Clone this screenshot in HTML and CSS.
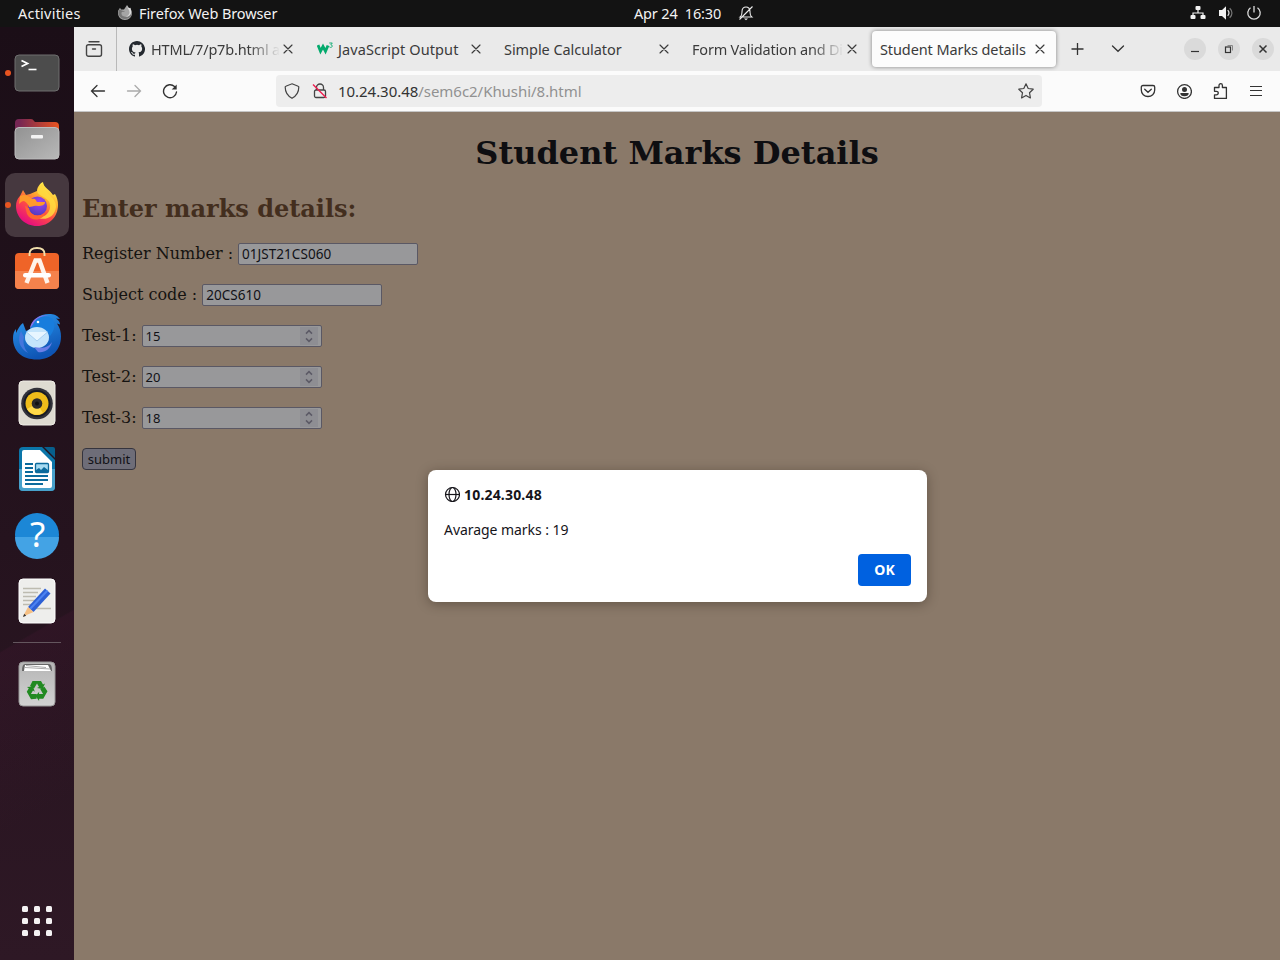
FILE: index.html
```html
<!DOCTYPE html>
<html lang="en">
<head>
<meta charset="utf-8">
<title>Student Marks details</title>
<link rel="stylesheet" href="styles.css">
</head>
<body>
<svg class="defs" width="0" height="0" aria-hidden="true">
  <defs>
    <symbol id="close" viewBox="0 0 16 16"><path d="M4 4l8 8M12 4l-8 8" fill="none" stroke="currentColor" stroke-width="1.15" stroke-linecap="round"/></symbol>
    <symbol id="spin" viewBox="0 0 18 18"><path d="M6 6.600l3-3 3 3M6 11.400l3 3 3-3" fill="none" stroke="#5c5a66" stroke-width="1.500"/></symbol>
  </defs>
</svg>
<div class="desktop">
  <header class="topbar">
    <span class="activities">Activities</span>
    <div class="app">
      <svg width="16" height="16" viewBox="0 0 16 16"><path d="M1 6L3 2.800l1 1.600 3 .1 1.200-1.800L10 0l2 3 1.500-.2L15 8c0 4-3 7-7 7S1 12 1 8z" fill="#a5a5a5"/><path d="M9.500 1c3 3 4.500 6 2.500 9s-7 2-7.500-1 2-2 3.500-2.500L5 5.500l-3-1C0 9 3 14 8 14s8-4 6-9z" fill="#777"/><path d="M10 .5c0 3 2.500 4 2.500 7 0 2-2 4-4 4 5 1 7-4 5-8l-1-.5-1.500-.2z" fill="#ddd"/></svg>
      <span class="appname">Firefox Web Browser</span>
    </div>
    <div class="clock"><span class="time">Apr 24&nbsp; 16:30</span>
      <svg width="16" height="16" viewBox="0 0 16 16" fill="none" stroke="#eee" stroke-width="1.100"><path d="M2.200 12h11.600c-2-1.500-1.800-3-1.800-5.500C12 3.500 10.300 2 8 2S4 3.500 4 6.500C4 9 4.200 10.500 2.200 12zM1.500 14.500l13-13"/><path d="M6 13.500h4L8 15.200z" fill="#eee" stroke="none"/></svg>
    </div>
    <div class="status">
      <svg width="16" height="16" viewBox="0 0 16 16" fill="#f2f2f2"><rect x="5.500" y="1" width="5" height="4" rx="1"/><rect x="0.500" y="10" width="5" height="4" rx="1"/><rect x="10.500" y="10" width="5" height="4" rx="1"/><path d="M8 4v4M3 11V8h10v3" fill="none" stroke="#f2f2f2" stroke-width="1.200"/></svg>
      <svg width="16" height="16" viewBox="0 0 16 16"><path d="M1 5h3l4-3.700v13.400L4 11H1z" fill="#f2f2f2"/><path d="M9.700 5.200c1.500 1.600 1.500 4 0 5.600" fill="none" stroke="#ddd" stroke-width="1.200"/><path d="M11.700 3.300c3 2.700 3 6.700 0 9.400" fill="none" stroke="#777" stroke-width="1.200"/></svg>
      <svg width="16" height="16" viewBox="0 0 16 16" fill="none" stroke="#ddd" stroke-width="1.300"><path d="M4.500 2.800a6.200 6.200 0 1 0 7 0M8 1v6.500"/></svg>
    </div>
  </header>
  <div class="workspace">
    <nav class="dock">
      <div class="slot running"><svg width="48" height="48" viewBox="0 0 48 48"><rect x="2" y="6" width="44" height="36" rx="4" fill="#4c4c4c" stroke="#6e6e6e"/><path d="M8.500 11.500l6 3-6 3" fill="none" stroke="#fff" stroke-width="1.800"/><path d="M15.500 20.500h8" stroke="#fff" stroke-width="1.600"/></svg></div>
      <div class="slot"><svg width="48" height="48" viewBox="0 0 48 48"><defs><linearGradient id="fold"><stop offset=".1" stop-color="#762653"/><stop offset="1" stop-color="#e95420"/></linearGradient><linearGradient id="gray" x2="1" y2="1"><stop stop-color="#929292"/><stop offset="1" stop-color="#b8b8b8"/></linearGradient></defs><path d="M2 16V8q0-4 4-4h12q2 0 3 2l1 1h20q4 0 4 4v6z" fill="url(#fold)"/><rect x="2" y="12.500" width="44" height="31.500" rx="4" fill="url(#gray)" stroke="#bdbdbd"/><rect x="18" y="20" width="12" height="3.500" rx="1" fill="#f3f3f3"/></svg></div>
      <div class="slot running focused"><svg width="48" height="48" viewBox="0 0 48 48"><defs><linearGradient id="fx" x1=".85" y1="0" x2=".25" y2="1"><stop offset=".1" stop-color="#fff14f"/><stop offset=".35" stop-color="#ffae2e"/><stop offset=".6" stop-color="#ff4f42"/><stop offset="1" stop-color="#e30587"/></linearGradient><radialGradient id="fxp" cx=".6" cy=".3" r=".8"><stop stop-color="#a142f4"/><stop offset="1" stop-color="#493bb8"/></radialGradient></defs><path d="M7 15l3-6 3 5 4-1 7-3c0-3 2-7 6-9 0 5 7 8 10 13l2-1c2 3 3 7 3 11 0 12-9 21-21 21S3 36 3 25c0-4 1-7 4-10z" fill="url(#fx)"/><path d="M30 2c-7 7-7 9-3 12 7 4 11 6 10 13-1 6-6 9-12 10 9 3 17-2 18-11 1-9-11-12-13-24z" fill="#ffdb40" opacity=".85"/><circle cx="24.500" cy="25" r="9.500" fill="url(#fxp)"/><path d="M7 15c4-2 8-1 12 3 4-1 4 2 5 3h8c0 3-3 4-7 4-4-1-6 1-9 1-1-3-2-4-5-6-2 0-3 1-5 3z" fill="#ff9a2a"/><path d="M12 25c2 0 2 2 4 2 1 7 8 10 16 5-2 8-14 9-18 1z" fill="#ff652f"/></svg></div>
      <div class="slot"><svg width="48" height="48" viewBox="0 0 48 48"><rect x="2" y="6" width="44" height="36" rx="4" fill="#ef6428"/><path d="M2 24h44v14q0 4-4 4H6q-4 0-4-4z" fill="#f5824c"/><path d="M16.500 9V7q0-6 7.500-6T31.500 7v2" fill="none" stroke="#f2dfac" stroke-width="1.900"/><path d="M13.500 36L22.500 13.500h4L34.500 36" fill="none" stroke="#fff3ea" stroke-width="4.400"/><rect x="10" y="26" width="28" height="4.500" rx="2.200" fill="#fff"/></svg></div>
      <div class="slot"><svg width="48" height="48" viewBox="0 0 48 48"><defs><linearGradient id="tb" x2=".4" y2="1"><stop stop-color="#2d9bf0"/><stop offset="1" stop-color="#0e54b4"/></linearGradient></defs><path d="M0 25c0-4 1-7 3-9v4c2-4 4-8 7-10l3 8 4-2c1-9 10-15 19-15 5 0 8 1 11 5l-4-.5c3 2 4 4 4 6l-3-1c3 4 4 9 4 13 0 13-9 23-24 23S0 38 0 25z" fill="url(#tb)"/><path d="M17 15C19 6 25 2 36 2c-7 1-11 3-13 7z" fill="#8772e8"/><path d="M24 6c6-4 14-3 16 1 3 5 1 11-3 16-3-7-11-10-19-7 1-4 3-7 6-10z" fill="#187ddd"/><path d="M8 18c-4 8-2 17 7 22-5-6-5-12-4-16z" fill="#4476dc"/><ellipse cx="24" cy="24.500" rx="12" ry="10.500" fill="#c4e4fb"/><path d="M13.500 19l10.500 9 10.500-9" fill="#e7f5ff" stroke="#a8cff1"/><path d="M21 34c9 2 15 0 18-5-2 8-8 11-14 10z" fill="#6b7fe7"/><circle cx="25" cy="9" r="1.300" fill="#fff"/></svg></div>
      <div class="slot"><svg width="48" height="48" viewBox="0 0 48 48"><rect x="6" y="2" width="36" height="44" rx="4" fill="#dedbd1" stroke="#efede6"/><circle cx="24" cy="24.500" r="15.800" fill="#32323a"/><circle cx="24" cy="24.500" r="13.500" fill="#171b25"/><circle cx="24" cy="24.500" r="11.500" fill="#eebc1a"/><path d="M14 30a11.500 11.500 0 0 0 16 4l-6-9.500z" fill="#ffda4a"/><circle cx="24" cy="24.500" r="5.300" fill="#2a2a2a"/><circle cx="24" cy="24.500" r="2" fill="#111"/></svg></div>
      <div class="slot"><svg width="48" height="48" viewBox="0 0 48 48"><path d="M6 6q0-4 4-4h19l13 13v27q0 4-4 4H10q-4 0-4-4z" fill="#0b76a9"/><path d="M6 24h36v18q0 4-4 4H10q-4 0-4-4z" fill="#47a1cb"/><path d="M9 7q0-2 2-2h16l12 12v24q0 2-2 2H11q-2 0-2-2z" fill="#fff"/><path d="M31 2h9q2 0 2 2v9z" fill="#075f8c"/><path d="M12 19h8M12 23h8M12 27h8M12 31h23M12 35h23M12 39h18" stroke="#0b6a9c" stroke-width="2"/><rect x="22.500" y="18.500" width="13" height="9" rx="1" fill="#a7dbf2" stroke="#0b6a9c" stroke-width="1.300"/><path d="M23 27v-2l3-2 2 2 3-3 4 3v2z" fill="#0b6a9c"/></svg></div>
      <div class="slot"><svg width="48" height="48" viewBox="0 0 48 48"><circle cx="24" cy="24" r="22" fill="#1c87d6"/><path d="M2 26a22 22 0 0 0 44 0z" fill="#43a3e5"/><text x="24.500" y="36" text-anchor="middle" class="qmark">?</text></svg></div>
      <div class="slot"><svg width="48" height="48" viewBox="0 0 48 48"><rect x="6" y="2" width="36" height="44" rx="4" fill="#eeeeec" stroke="#fff"/><path d="M10 11.500h18M10 15.500h15M10 19.500h13M10 23.500h13M10 27.500h10M20 31.500h18" stroke="#bdbbb0" stroke-width="1.700"/><path d="M15 30L32 11.500l5.500 5L20.500 35z" fill="#2d60d5"/><path d="M17 32l17.500-18.500" stroke="#4c83f2" stroke-width="2"/><path d="M15 30l5.500 5L10 39.500z" fill="#f5bf83"/><path d="M11.200 36.700l2 2-3.200 1.300z" fill="#333"/></svg></div>
      <div class="rule"></div>
      <div class="slot"><svg width="48" height="48" viewBox="0 0 48 48"><defs><linearGradient id="bin" x2="0" y2="1"><stop stop-color="#b5b5b5"/><stop offset="1" stop-color="#d2d2d2"/></linearGradient></defs><rect x="6" y="2" width="36" height="44" rx="4" fill="url(#bin)" stroke="#999"/><path d="M9 11q0-7 3-7h24q3 0 3 7z" fill="#666"/><path d="M11 11l1-6h23l3 6z" fill="#fff"/><path d="M12 7.500l25 1.500M13 5.500l20 2" stroke="#aaa"/><g fill="#218a21"><path id="arm" d="M19.500 21h8.500l2 3.500 2-1-2.500 5.500-5.500-1 2-1-2-3.500-3 5-4-2.500z"/><use href="#arm" transform="rotate(120 24 30.500)"/><use href="#arm" transform="rotate(240 24 30.500)"/></g></svg></div>
      <div class="apps"><i></i><i></i><i></i><i></i><i></i><i></i><i></i><i></i><i></i></div>
    </nav>
    <main class="browser">
      <div class="tabbar">
        <div class="view"><svg width="18" height="18" viewBox="0 0 18 18" fill="none" stroke="#444" stroke-width="1.400" stroke-linecap="round"><path d="M4 1.700h10"/><rect x="1.500" y="4.700" width="15" height="11.600" rx="2"/><path d="M7.500 9h3"/></svg></div>
        <div class="tabs">
          <div class="tab"><svg class="fav" width="16" height="16" viewBox="0 0 16 16"><path fill="#24292f" d="M8 0C3.580 0 0 3.580 0 8c0 3.540 2.290 6.530 5.470 7.590.4.070.55-.17.55-.38 0-.19-.01-.82-.01-1.490-2.010.37-2.530-.49-2.690-.94-.09-.23-.48-.94-.82-1.130-.28-.15-.68-.52-.01-.53.63-.01 1.080.58 1.230.82.72 1.210 1.870.87 2.330.66.070-.52.28-.87.51-1.070-1.780-.2-3.640-.89-3.640-3.950 0-.87.31-1.590.82-2.150-.08-.2-.36-1.020.08-2.120 0 0 .67-.21 2.200.82a7.600 7.600 0 0 1 4 0c1.530-1.040 2.200-.82 2.200-.82.44 1.100.16 1.920.08 2.120.51.560.82 1.270.82 2.150 0 3.070-1.870 3.750-3.650 3.950.29.250.54.730.54 1.480 0 1.070-.01 1.930-.01 2.200 0 .21.15.46.55.38A8 8 0 0 0 8 0z"/></svg><span class="label t1 fade">HTML/7/p7b.html a</span><svg class="x" width="16" height="16"><use href="#close"/></svg></div>
          <div class="tab"><svg class="fav" width="16" height="16" viewBox="0 0 16 16" fill="none"><path d="M1 4l2.500 6.200L6 5.500l2.500 4.700L11 4.500" stroke="#04aa6d" stroke-width="2.800"/><path d="M12.300 2h3l-1.500 1.800c2 0 2 2.600-.2 2.600q-.8 0-1.300-.7" stroke="#04aa6d" stroke-width=".9"/></svg><span class="label t2">JavaScript Output</span><svg class="x" width="16" height="16"><use href="#close"/></svg></div>
          <div class="tab"><span class="label t3">Simple Calculator</span><svg class="x" width="16" height="16"><use href="#close"/></svg></div>
          <div class="tab"><span class="label t4 fade">Form Validation and Di</span><svg class="x" width="16" height="16"><use href="#close"/></svg></div>
          <div class="tab active"><span class="label t5">Student Marks details</span><svg class="x" width="16" height="16"><use href="#close"/></svg></div>
        </div>
        <svg class="plus" width="16" height="16" viewBox="0 0 16 16"><path d="M7.500 2v12M1.500 8h12" stroke="#333" stroke-width="1.300"/></svg>
        <svg class="chev" width="16" height="16" viewBox="0 0 16 16"><path d="M2.500 5L8 10.300 13.500 5" fill="none" stroke="#333" stroke-width="1.300" stroke-linecap="round"/></svg>
        <div class="controls">
          <span><svg width="16" height="16" viewBox="0 0 16 16"><path d="M4 10.500h8" stroke="#333" stroke-width="1.200"/></svg></span>
          <span><svg width="16" height="16" viewBox="0 0 16 16" fill="none" stroke="#333"><rect x="4.500" y="6" width="5" height="5.500" stroke-width="1.200"/><path d="M6.500 4.500h5v5" stroke="#888"/></svg></span>
          <span><svg width="16" height="16" viewBox="0 0 16 16"><path d="M4.500 4.500l7 7M11.500 4.500l-7 7" stroke="#333" stroke-width="1.500"/></svg></span>
        </div>
      </div>
      <div class="navbar">
        <div class="navbtns">
          <svg width="16" height="16" viewBox="0 0 16 16" fill="none" stroke="#333" stroke-width="1.300" stroke-linecap="round"><path d="M14.500 8H1.500M7 2.500L1.500 8 7 13.500"/></svg>
          <svg width="16" height="16" viewBox="0 0 16 16" fill="none" stroke="#aaa" stroke-width="1.300" stroke-linecap="round"><path d="M1.500 8h13M9 2.500L14.500 8 9 13.500"/></svg>
          <svg width="16" height="16" viewBox="0 0 16 16" fill="none" stroke="#333" stroke-width="1.400" stroke-linecap="round"><path d="M12.500 3.500A6.500 6.500 0 1 0 14.500 9"/><path d="M14.700 1.500v5h-5z" fill="#333" stroke="none"/></svg>
        </div>
        <div class="urlbar">
          <svg width="16" height="16" viewBox="0 0 16 16" fill="none" stroke="#444" stroke-width="1.200"><path d="M8 .8l6.200 2.400q.6.200.6.900C14.800 9 12.500 13 8 15.300 3.500 13 1.200 9 1.200 4.100q0-.7.6-.9z"/></svg>
          <svg width="16" height="16" viewBox="0 0 16 16" fill="none" stroke="#444" stroke-width="1.300"><path d="M4.500 7V4.500a3.500 3.500 0 0 1 7 0V7"/><rect x="2.500" y="7" width="11" height="7.500" rx="1.500"/><path d="M1 1.500l13.500 13.500" stroke="#f01e50" stroke-width="1.400"/></svg>
          <span class="url"><b>10.24.30.48</b>/sem6c2/Khushi/8.html</span>
          <svg class="star" width="16" height="16" viewBox="0 0 16 16" fill="none" stroke="#444" stroke-width="1.200" stroke-linejoin="round"><path d="M8 .8l2.200 4.700 5 .7-3.700 3.500.9 5.200L8 12.400l-4.400 2.500.9-5.200L.8 6.200l5-.7z"/></svg>
        </div>
        <div class="tools">
          <svg width="16" height="16" viewBox="0 0 16 16" fill="none" stroke="#333" stroke-width="1.300" stroke-linecap="round"><path d="M3 2.500h10q1.700 0 1.700 1.500v3c0 4-3 6.500-6.700 6.500S1.300 11 1.300 7V4Q1.300 2.500 3 2.500z"/><path d="M4.700 6.200L8 9.300l3.300-3.100"/></svg>
          <svg width="16" height="16" viewBox="0 0 16 16"><circle cx="8.500" cy="8.500" r="6.900" fill="none" stroke="#333" stroke-width="1.300"/><circle cx="8.500" cy="6.500" r="2.500" fill="#333"/><path d="M4.300 10h8.400q0 3.200-4.200 3.200T4.300 10z" fill="#333"/></svg>
          <svg width="16" height="16" viewBox="0 0 16 16" fill="none" stroke="#333" stroke-width="1.300" stroke-linejoin="round"><path d="M2.500 4.500h4.500V2.400a1.700 1.700 0 0 1 3.400 0v2.100h4v11H2.500v-3.700h2a1.700 1.700 0 0 0 0-3.500h-2z"/></svg>
          <svg width="16" height="16" viewBox="0 0 16 16"><path d="M2 3.500h12M2 7.500h12M2 12.500h12" stroke="#333" stroke-width="1.200"/></svg>
        </div>
      </div>
      <section class="page">
        <h1>Student Marks Details</h1>
        <h2>Enter marks details:</h2>
        <div class="row"><span>Register Number :</span><div class="field"><span class="value">01JST21CS060</span></div></div>
        <div class="row"><span>Subject code :</span><div class="field"><span class="value">20CS610</span></div></div>
        <div class="row"><span>Test-1:</span><div class="field"><span>15</span><svg class="spin" width="18" height="18"><use href="#spin"/></svg></div></div>
        <div class="row"><span>Test-2:</span><div class="field"><span>20</span><svg class="spin" width="18" height="18"><use href="#spin"/></svg></div></div>
        <div class="row"><span>Test-3:</span><div class="field"><span>18</span><svg class="spin" width="18" height="18"><use href="#spin"/></svg></div></div>
        <div class="submit">submit</div>
        <div class="dialog">
          <div class="host"><svg width="16" height="16" viewBox="0 0 16 16" fill="none" stroke="#15141a" stroke-width="1.200"><circle cx="8.500" cy="8.500" r="7"/><ellipse cx="8.500" cy="8.500" rx="3.500" ry="7"/><path d="M1.500 8.500h14"/></svg><span>10.24.30.48</span></div>
          <p>Avarage marks : 19</p>
          <div class="ok">OK</div>
        </div>
      </section>
    </main>
  </div>
</div>
</body>
</html>
```
FILE: styles.css
```css
* { box-sizing: border-box; }
body { margin: 0; font-family: "Noto Sans", "Open Sans", sans-serif; font-size: 14.5px; }
svg { display: block; flex: none; }
.defs { position: absolute; }
.desktop { width: 1280px; height: 960px; display: flex; flex-direction: column; overflow: hidden; }

.topbar { height: 27px; flex: none; background: #131313; color: #f2f2f2; display: grid; grid-template-columns: 117px 517px 1fr auto; align-items: center; padding: 0 18px 1px 0; white-space: nowrap; line-height: 20px; }
.activities { padding-left: 18px; letter-spacing: .22px; }
.app, .clock, .status { display: flex; align-items: center; }
.app { gap: 6px; }
.appname { letter-spacing: -.1px; }
.clock { gap: 17px; }
.time { letter-spacing: -.16px; }
.status { gap: 12px; }

.workspace { flex: 1; display: flex; min-height: 0; }
.dock { width: 74px; flex: none; display: flex; flex-direction: column; align-items: center; padding: 14px 0 24px; background: linear-gradient(150deg, transparent 64%, rgba(75, 25, 55, .22) 64.2%, transparent 83%), linear-gradient(#1b0e17, #25131e 55%, #2e1825); }
.slot { width: 64px; height: 64px; margin-bottom: 2px; display: flex; align-items: center; justify-content: center; border-radius: 10px; position: relative; flex: none; }
.focused { background: #46383f; }
.running::before { content: ""; position: absolute; left: 0; top: 29px; width: 6px; height: 6px; border-radius: 50%; background: #e95420; }
.qmark { font: 35px "Noto Sans", sans-serif; fill: #fff; }
.rule { width: 48px; height: 1px; flex: none; margin: 7px 0 9px; background: #64565e; }
.apps { margin-top: auto; display: grid; grid-template-columns: repeat(3, 6px); gap: 6px; }
.apps i { width: 6px; height: 6px; border-radius: 1.5px; background: #f4f2f3; }

.browser { flex: 1; display: flex; flex-direction: column; min-width: 0; }
.tabbar { height: 44px; flex: none; background: #eaeaea; display: flex; align-items: center; color: #3b3b3b; }
.view { width: 43px; height: 44px; padding-left: 11px; display: flex; align-items: center; border-right: 1px solid #b9b9b9; }
.tabs { display: flex; margin-left: 1px; }
.tab { width: 184px; height: 36px; margin: 0 2px; padding: 0 8px; display: flex; align-items: center; border-radius: 4px; white-space: nowrap; }
.tab .fav { margin: -1px 5px 0 1px; }
.tab .label { flex: 1; min-width: 0; letter-spacing: -.1px; }
.tab .t1 { letter-spacing: -.18px; padding-left: 1px; }
.tab .t2 { letter-spacing: .1px; }
.tab .t3 { letter-spacing: -.06px; }
.tab .t4 { letter-spacing: -.2px; }
.fade { -webkit-mask-image: linear-gradient(to left, transparent, #000 32px); mask-image: linear-gradient(to left, transparent, #000 32px); }
.active { background: #fcfcfc; box-shadow: 0 0 4px rgba(0, 0, 0, .45); }
.plus { margin-left: 12px; }
.chev { margin-left: 24px; }
.controls { display: flex; gap: 12px; margin-left: auto; padding-right: 6px; }
.controls span { width: 22px; height: 22px; border-radius: 50%; background: #dadada; display: flex; align-items: center; justify-content: center; }

.navbar { height: 41px; flex: none; background: #fbfbfb; border-bottom: 1px solid #c6c6c6; display: flex; align-items: center; }
.navbtns { width: 202px; display: flex; gap: 20px; padding-left: 16px; }
.urlbar { width: 766px; height: 32px; border-radius: 4px; background: #ededed; display: flex; align-items: center; gap: 12px; padding: 0 8px; }
.url { color: #919191; font-size: 15px; letter-spacing: -.04px; margin-left: -2px; }
.url b { color: #333; font-weight: 400; }
.star { margin-left: auto; }
.tools { display: flex; gap: 20px; margin-left: auto; padding-right: 16px; }

.page { flex: 1; position: relative; background: #8a7969; padding: 0 8px; font-family: "DejaVu Serif", serif; font-size: 16px; color: #151311; }
.page h1 { margin: 22px 0 21px; font-size: 32px; line-height: 38px; text-align: center; color: #0e0e11; }
.page h2 { margin: 0 0 18px; font-size: 24px; line-height: 31px; color: #432e1e; }
.row { height: 22px; margin-bottom: 19px; display: flex; align-items: center; gap: 5px; white-space: nowrap; }
.field { width: 180px; height: 22px; border: 1px solid #5a5864; border-radius: 2px; background: #98989a; display: flex; align-items: center; justify-content: space-between; padding: 0 3px; margin-top: 1px; font: 13px "Noto Sans", sans-serif; color: #111116; }
.value { font-size: 13.5px; letter-spacing: .05px; }
.spin { background: #8e8e93; }
.submit { width: 54px; height: 22px; margin-top: 20px; border: 1px solid #35343e; border-radius: 4px; background: #6e6d78; color: #111116; font: 13px/20px "Noto Sans", sans-serif; text-align: center; }
.dialog { position: absolute; left: 354px; top: 358px; width: 499px; height: 132px; padding: 16px; border-radius: 8px; background: #fff; color: #15141a; font: 14px "Noto Sans", sans-serif; box-shadow: 0 2px 12px rgba(40, 30, 20, .4); display: flex; flex-direction: column; }
.host { display: flex; align-items: center; gap: 4px; height: 16px; font-weight: 700; letter-spacing: .18px; }
.dialog p { margin: 18px 0 0; line-height: 20px; letter-spacing: -.05px; }
.ok { margin: auto 0 0 auto; width: 53px; height: 32px; border-radius: 4px; background: #0061e0; color: #fff; font-weight: 700; line-height: 32px; text-align: center; }
```
